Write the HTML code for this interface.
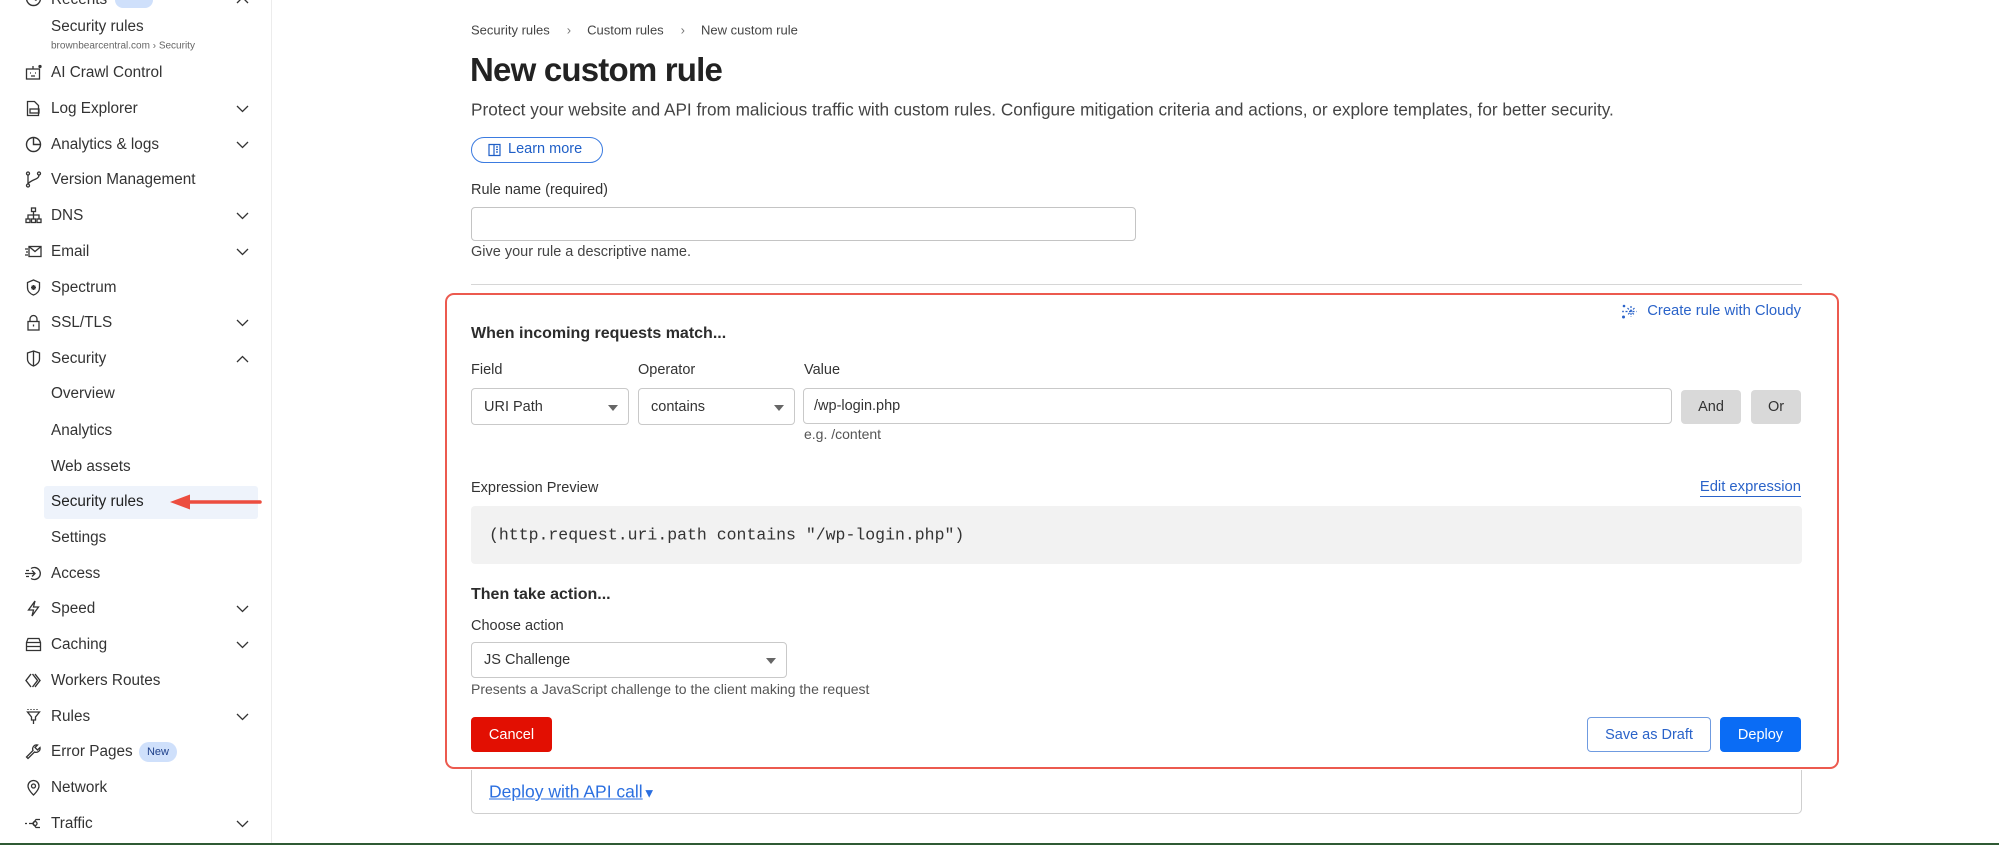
<!DOCTYPE html>
<html><head><meta charset="utf-8">
<style>
*{box-sizing:border-box;margin:0;padding:0}
body{width:1999px;height:845px;overflow:hidden;background:#fff;font-family:"Liberation Sans",sans-serif;color:#313131;position:relative}
.a{position:absolute;white-space:nowrap}
.sb{font-size:15.3px;color:#333;line-height:18px}
.ic{position:absolute;left:25px;width:17px;height:17px}
.chev{position:absolute;left:236px;width:13px;height:8px}
.mid{transform:translateY(-50%)}
.sel{position:absolute;border:1px solid #c9c9c9;border-radius:4px;background:#fff;font-size:14.5px;color:#333}
.sel span{position:absolute;left:12px;top:50%;transform:translateY(-50%)}
.sel i{position:absolute;right:10px;top:50%;margin-top:-2px;border-left:5px solid transparent;border-right:5px solid transparent;border-top:6px solid #666}
.btn{position:absolute;border-radius:4px;font-size:14.5px;display:flex;align-items:center;justify-content:center}
</style></head><body>
<!-- sidebar -->
<div class="a" style="left:271px;top:0;width:1px;height:845px;background:#ececec"></div>
<div class="a" style="left:44px;top:486px;width:214px;height:33px;background:#eef3fb;border-radius:3px"></div>

<svg class="ic" style="top:-10px" viewBox="0 0 17 17" fill="none" stroke="#333" stroke-width="1.4"><circle cx="8.5" cy="8.5" r="7"/><path d="M8.5 4.5v4l3 2"/></svg>
<div class="a sb" style="left:51px;top:-9px">Recents</div>
<div class="a" style="left:115px;top:-8px;width:38px;height:16px;background:#cfe0fb;border-radius:8px"></div>
<svg class="chev" style="top:-4px" viewBox="0 0 13 8" fill="none" stroke="#333" stroke-width="1.3"><path d="M1 7l5.5-5.5L12 7"/></svg>

<div class="a sb mid" style="left:51px;top:27px">Security rules</div>
<div class="a mid" style="left:51px;top:46px;font-size:10px;color:#666">brownbearcentral.com › Security</div>

<svg class="ic" style="top:64px" viewBox="0 0 17 17" fill="none" stroke="#333" stroke-width="1.3"><rect x="1.5" y="5" width="13" height="10"/><path d="M5 9h1M10 9h1M6 12h4M8 5V2"/><circle cx="15" cy="2.5" r="1" fill="#333"/></svg>
<div class="a sb mid" style="left:51px;top:73px">AI Crawl Control</div>

<svg class="ic" style="top:100px" viewBox="0 0 17 17" fill="none" stroke="#333" stroke-width="1.3"><path d="M2.5 1.5h7l4 4v10h-11z"/><rect x="5" y="9" width="9" height="4"/></svg>
<div class="a sb mid" style="left:51px;top:109px">Log Explorer</div>
<svg class="chev" style="top:105px" viewBox="0 0 13 8" fill="none" stroke="#333" stroke-width="1.3"><path d="M1 1l5.5 5.5L12 1"/></svg>

<svg class="ic" style="top:136px" viewBox="0 0 17 17" fill="none" stroke="#333" stroke-width="1.4"><circle cx="8.5" cy="8.5" r="7"/><path d="M8.5 1.5v7h7"/></svg>
<div class="a sb mid" style="left:51px;top:145px">Analytics &amp; logs</div>
<svg class="chev" style="top:141px" viewBox="0 0 13 8" fill="none" stroke="#333" stroke-width="1.3"><path d="M1 1l5.5 5.5L12 1"/></svg>

<svg class="ic" style="top:171px" viewBox="0 0 17 17" fill="none" stroke="#333" stroke-width="1.3"><circle cx="3" cy="2.5" r="1.5"/><circle cx="3" cy="14.5" r="1.5"/><circle cx="14" cy="2.5" r="1.5"/><path d="M3 4v9M14 4c0 5-8 4-11 9"/></svg>
<div class="a sb mid" style="left:51px;top:180px">Version Management</div>

<svg class="ic" style="top:207px" viewBox="0 0 17 17" fill="none" stroke="#333" stroke-width="1.3"><rect x="6.5" y="1" width="4" height="3.5"/><rect x="1" y="12" width="4" height="3.5"/><rect x="6.5" y="12" width="4" height="3.5"/><rect x="12" y="12" width="4" height="3.5"/><path d="M8.5 4.5v7.5M3 12V8h11v4"/></svg>
<div class="a sb mid" style="left:51px;top:216px">DNS</div>
<svg class="chev" style="top:212px" viewBox="0 0 13 8" fill="none" stroke="#333" stroke-width="1.3"><path d="M1 1l5.5 5.5L12 1"/></svg>

<svg class="ic" style="top:243px" viewBox="0 0 17 17" fill="none" stroke="#333" stroke-width="1.3"><rect x="4" y="3.5" width="12" height="10"/><path d="M4 3.5l6 5 6-5M0 6h3M1 9h2M0 12h3"/></svg>
<div class="a sb mid" style="left:51px;top:252px">Email</div>
<svg class="chev" style="top:248px" viewBox="0 0 13 8" fill="none" stroke="#333" stroke-width="1.3"><path d="M1 1l5.5 5.5L12 1"/></svg>

<svg class="ic" style="top:279px" viewBox="0 0 17 17" fill="none" stroke="#333" stroke-width="1.3"><path d="M8.5 1l6 2.5v5c0 4-3 6.5-6 7.5-3-1-6-3.5-6-7.5v-5z"/><path d="M8.5 6v5M6 8.5h5M6.7 6.7l3.6 3.6M10.3 6.7l-3.6 3.6"/></svg>
<div class="a sb mid" style="left:51px;top:288px">Spectrum</div>

<svg class="ic" style="top:314px" viewBox="0 0 17 17" fill="none" stroke="#333" stroke-width="1.3"><rect x="3" y="7.5" width="11" height="8.5"/><path d="M5 7.5V5a3.5 3.5 0 017 0v2.5M8.5 10.5v2"/></svg>
<div class="a sb mid" style="left:51px;top:323px">SSL/TLS</div>
<svg class="chev" style="top:319px" viewBox="0 0 13 8" fill="none" stroke="#333" stroke-width="1.3"><path d="M1 1l5.5 5.5L12 1"/></svg>

<svg class="ic" style="top:350px" viewBox="0 0 17 17" fill="none" stroke="#333" stroke-width="1.3"><path d="M8.5 1l6 2v6c0 3.5-3 6-6 7-3-1-6-3.5-6-7V3z"/><path d="M8.5 1.5v14"/></svg>
<div class="a sb mid" style="left:51px;top:359px">Security</div>
<svg class="chev" style="top:355px" viewBox="0 0 13 8" fill="none" stroke="#333" stroke-width="1.3"><path d="M1 7l5.5-5.5L12 7"/></svg>

<div class="a sb mid" style="left:51px;top:394px">Overview</div>
<div class="a sb mid" style="left:51px;top:431px">Analytics</div>
<div class="a sb mid" style="left:51px;top:467px">Web assets</div>
<div class="a sb mid" style="left:51px;top:502px;color:#222">Security rules</div>
<div class="a sb mid" style="left:51px;top:538px">Settings</div>

<svg class="a" style="left:168px;top:493px" width="94" height="18" viewBox="0 0 94 18"><path d="M20 9H92" stroke="#ec4d3f" stroke-width="3.5" stroke-linecap="round"/><path d="M2 9L22 1.5v15z" fill="#ec4d3f"/></svg>

<svg class="ic" style="top:565px" viewBox="0 0 17 17" fill="none" stroke="#333" stroke-width="1.3"><path d="M6 3.5a6 6 0 110 10"/><path d="M0 8.5h10M7 5.5l3 3-3 3M1 5.5h3M1 11.5h3"/></svg>
<div class="a sb mid" style="left:51px;top:574px">Access</div>

<svg class="ic" style="top:600px" viewBox="0 0 17 17" fill="none" stroke="#333" stroke-width="1.3"><path d="M10 1L3.5 10h5L7 16l6.5-9h-5z"/></svg>
<div class="a sb mid" style="left:51px;top:609px">Speed</div>
<svg class="chev" style="top:605px" viewBox="0 0 13 8" fill="none" stroke="#333" stroke-width="1.3"><path d="M1 1l5.5 5.5L12 1"/></svg>

<svg class="ic" style="top:636px" viewBox="0 0 17 17" fill="none" stroke="#333" stroke-width="1.3"><path d="M3 2.5h11l1.5 4v8h-14v-8z"/><path d="M1.5 6.5h14M1.5 10.5h14"/></svg>
<div class="a sb mid" style="left:51px;top:645px">Caching</div>
<svg class="chev" style="top:641px" viewBox="0 0 13 8" fill="none" stroke="#333" stroke-width="1.3"><path d="M1 1l5.5 5.5L12 1"/></svg>

<svg class="ic" style="top:672px" viewBox="0 0 17 17" fill="none" stroke="#333" stroke-width="1.4"><path d="M6 2L1 8.5 6 15M10 2l5 6.5-5 6.5M7.5 2l5 6.5-5 6.5"/></svg>
<div class="a sb mid" style="left:51px;top:681px">Workers Routes</div>

<svg class="ic" style="top:708px" viewBox="0 0 17 17" fill="none" stroke="#333" stroke-width="1.3"><path d="M3 1v1M6 1v1M9 1v1M12 1v1M2.5 4h12l-4 5v3h-4V9zM8.5 12v4"/></svg>
<div class="a sb mid" style="left:51px;top:717px">Rules</div>
<svg class="chev" style="top:713px" viewBox="0 0 13 8" fill="none" stroke="#333" stroke-width="1.3"><path d="M1 1l5.5 5.5L12 1"/></svg>

<svg class="ic" style="top:743px" viewBox="0 0 17 17" fill="none" stroke="#333" stroke-width="1.3"><path d="M15 4.5a4 4 0 01-5.5 4.5L3 15.5 1.5 14 8 7.5A4 4 0 0112.5 2L10 4.5 12.5 7z"/></svg>
<div class="a sb mid" style="left:51px;top:752px">Error Pages</div>
<div class="a" style="left:139px;top:742px;width:38px;height:20px;background:#cfe0fb;border-radius:10px;font-size:11px;color:#1d3f8a;text-align:center;line-height:20px">New</div>

<svg class="ic" style="top:779px" viewBox="0 0 17 17" fill="none" stroke="#333" stroke-width="1.3"><path d="M8.5 16s5.5-5 5.5-9a5.5 5.5 0 00-11 0c0 4 5.5 9 5.5 9z"/><circle cx="8.5" cy="7" r="2"/></svg>
<div class="a sb mid" style="left:51px;top:788px">Network</div>

<svg class="ic" style="top:815px" viewBox="0 0 17 17" fill="none" stroke="#333" stroke-width="1.3"><path d="M4 8.5h4M8 8.5l3-4h4M8 8.5l3 4h4M0 8.5h2"/><circle cx="10" cy="8.5" r="2"/></svg>
<div class="a sb mid" style="left:51px;top:824px">Traffic</div>
<svg class="chev" style="top:820px" viewBox="0 0 13 8" fill="none" stroke="#333" stroke-width="1.3"><path d="M1 1l5.5 5.5L12 1"/></svg>

<!-- main -->
<div class="a mid" style="left:471px;top:30px;font-size:13px;color:#444">Security rules<span style="margin:0 16px 0 17px;color:#777">›</span>Custom rules<span style="margin:0 16px 0 17px;color:#777">›</span>New custom rule</div>
<div class="a mid" style="left:470px;top:70px;font-size:33px;font-weight:bold;color:#222;letter-spacing:-0.8px">New custom rule</div>
<div class="a mid" style="left:471px;top:110px;font-size:17.2px;color:#444">Protect your website and API from malicious traffic with custom rules. Configure mitigation criteria and actions, or explore templates, for better security.</div>
<div class="a" style="left:471px;top:137px;width:132px;height:26px;border:1.5px solid #3b7be0;border-radius:13px;color:#1f5fc7;font-size:14.5px;line-height:23px;padding-left:36px">Learn more</div>
<svg class="a" style="left:488px;top:143px" width="14" height="14" viewBox="0 0 14 14" fill="none" stroke="#1f5fc7" stroke-width="1.2"><path d="M1 1.5h5v11H1zM6 1.5h6v11H6M8 4h2M8 6.5h2M8 9h2"/></svg>
<div class="a mid" style="left:471px;top:190px;font-size:14.5px;color:#333">Rule name (required)</div>
<div class="a" style="left:471px;top:207px;width:665px;height:34px;border:1px solid #c4c4c4;border-radius:4px"></div>
<div class="a mid" style="left:471px;top:252px;font-size:14.5px;color:#444">Give your rule a descriptive name.</div>
<div class="a" style="left:471px;top:284px;width:1331px;height:1px;background:#d6d6d6"></div>

<!-- red box -->
<div class="a" style="left:445px;top:293px;width:1394px;height:476px;border:2px solid #ec5a4f;border-radius:9px"></div>
<svg class="a" style="left:1621px;top:303px" width="17" height="17" viewBox="0 0 17 17" fill="#2a63c9"><circle cx="3" cy="3" r="1.3"/><circle cx="2.5" cy="14" r="1.5"/><circle cx="2" cy="8.5" r="0.9"/><path d="M10 3v11M4.5 8.5h11M6.5 5l7 7M13.5 5l-7 7" stroke="#2a63c9" stroke-width="1.2" stroke-dasharray="2 1.5"/></svg>
<div class="a mid" style="right:198px;top:311px;font-size:14.8px;color:#2a63c9">Create rule with Cloudy</div>
<div class="a mid" style="left:471px;top:334px;font-size:16px;font-weight:bold;color:#2c2c2c">When incoming requests match...</div>
<div class="a mid" style="left:471px;top:370px;font-size:14.5px;color:#333">Field</div>
<div class="a mid" style="left:638px;top:370px;font-size:14.5px;color:#333">Operator</div>
<div class="a mid" style="left:804px;top:370px;font-size:14.5px;color:#333">Value</div>
<div class="sel" style="left:471px;top:388px;width:158px;height:37px"><span>URI Path</span><i></i></div>
<div class="sel" style="left:638px;top:388px;width:157px;height:37px"><span>contains</span><i></i></div>
<div class="sel" style="left:803px;top:388px;width:869px;height:36px"><span style="left:10px">/wp-login.php</span></div>
<div class="btn" style="left:1681px;top:390px;width:60px;height:34px;background:#d9d9d9;color:#333">And</div>
<div class="btn" style="left:1751px;top:390px;width:50px;height:34px;background:#d9d9d9;color:#333">Or</div>
<div class="a mid" style="left:804px;top:434px;font-size:14px;color:#555">e.g. /content</div>
<div class="a mid" style="left:471px;top:488px;font-size:14.5px;color:#333">Expression Preview</div>
<div class="a mid" style="right:198px;top:488px;font-size:14.8px;color:#2a63c9;border-bottom:1.5px solid #2a63c9;line-height:17px">Edit expression</div>
<div class="a" style="left:471px;top:506px;width:1331px;height:58px;background:#f2f2f2;border-radius:4px"></div>
<div class="a mid" style="left:489px;top:535px;font-family:'Liberation Mono',monospace;font-size:16.5px;color:#333">(http.request.uri.path contains "/wp-login.php")</div>
<div class="a mid" style="left:471px;top:595px;font-size:16px;font-weight:bold;color:#2c2c2c">Then take action...</div>
<div class="a mid" style="left:471px;top:626px;font-size:14.5px;color:#333">Choose action</div>
<div class="sel" style="left:471px;top:642px;width:316px;height:36px"><span>JS Challenge</span><i></i></div>
<div class="a mid" style="left:471px;top:689px;font-size:14px;color:#555">Presents a JavaScript challenge to the client making the request</div>
<div class="btn" style="left:471px;top:717px;width:81px;height:35px;background:#e20f02;color:#fff">Cancel</div>
<div class="btn" style="left:1587px;top:717px;width:124px;height:35px;border:1px solid #6f9be0;color:#2a63c9;background:#fff">Save as Draft</div>
<div class="btn" style="left:1720px;top:717px;width:81px;height:35px;background:#0a6cf5;color:#fff">Deploy</div>

<div class="a" style="left:471px;top:770px;width:1331px;height:44px;border:1px solid #cfcfcf;border-top:none;border-radius:0 0 5px 5px"></div>
<div class="a mid" style="left:489px;top:792px;font-size:17.5px;color:#2b6fe0"><span style="text-decoration:underline">Deploy with API call</span><span style="font-size:13px">▼</span></div>

<div class="a" style="left:0;top:843px;width:1999px;height:2px;background:#2f5a34"></div>
</body></html>
